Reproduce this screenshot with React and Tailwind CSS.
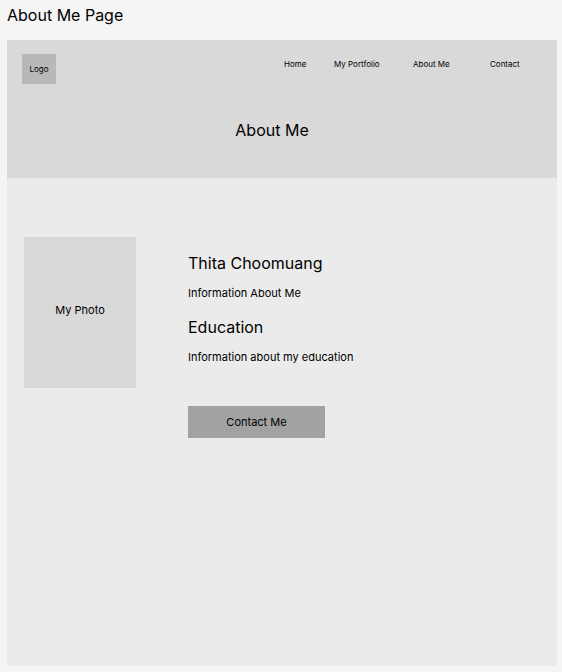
const links = [
  { label: "Home", width: "w-[50px]" },
  { label: "My Portfolio", width: "w-[79px]" },
  { label: "About Me", width: "w-[77px]" },
  { label: "Contact", width: "w-8" },
];

export default function App() {
  return (
    <div className="flex min-h-screen flex-col bg-[#f5f5f5] pr-[5px] pb-1.5 pl-[7px] font-[Inter,sans-serif] text-black">
      <p className="pt-[3px] pb-[13px] text-base leading-6">About Me Page</p>
      <div className="flex grow flex-col bg-[#ebebeb]">
        <header className="bg-[#d9d9d9] pb-9">
          <div className="flex items-start justify-between pt-3.5 pr-[35px] pl-[15px]">
            <a href="#home" className="flex h-[30px] w-[34px] items-center justify-center bg-[#b8b8b8] text-[8px] leading-4">Logo</a>
            <nav className="flex pt-0.5 text-[8px] leading-4">
              {links.map((l) => (
                <a key={l.label} href="#top" className={`${l.width} whitespace-nowrap`}>{l.label}</a>
              ))}
            </nav>
          </div>
          <h1 className="pt-[34px] pr-5 text-center text-base leading-6">About Me</h1>
        </header>
        <main className="flex items-start gap-[52px] px-[17px] pt-[59px]">
          <div className="flex h-[151px] w-28 shrink-0 items-center justify-center bg-[#d9d9d9] pb-1.5 text-[11px] leading-4">My Photo</div>
          <div className="pt-3.5">
            <h2 className="text-base leading-6">Thita Choomuang</h2>
            <p className="pt-2.5 text-[11px] leading-4">Information About Me</p>
            <h2 className="pt-3.5 text-base leading-6">Education</h2>
            <p className="pt-2.5 text-[11px] leading-4">Information about my education</p>
            <button type="button" className="mt-[41px] h-8 w-[137px] bg-[#a2a2a2] text-[11px] leading-4">Contact Me</button>
          </div>
        </main>
      </div>
    </div>
  );
}
